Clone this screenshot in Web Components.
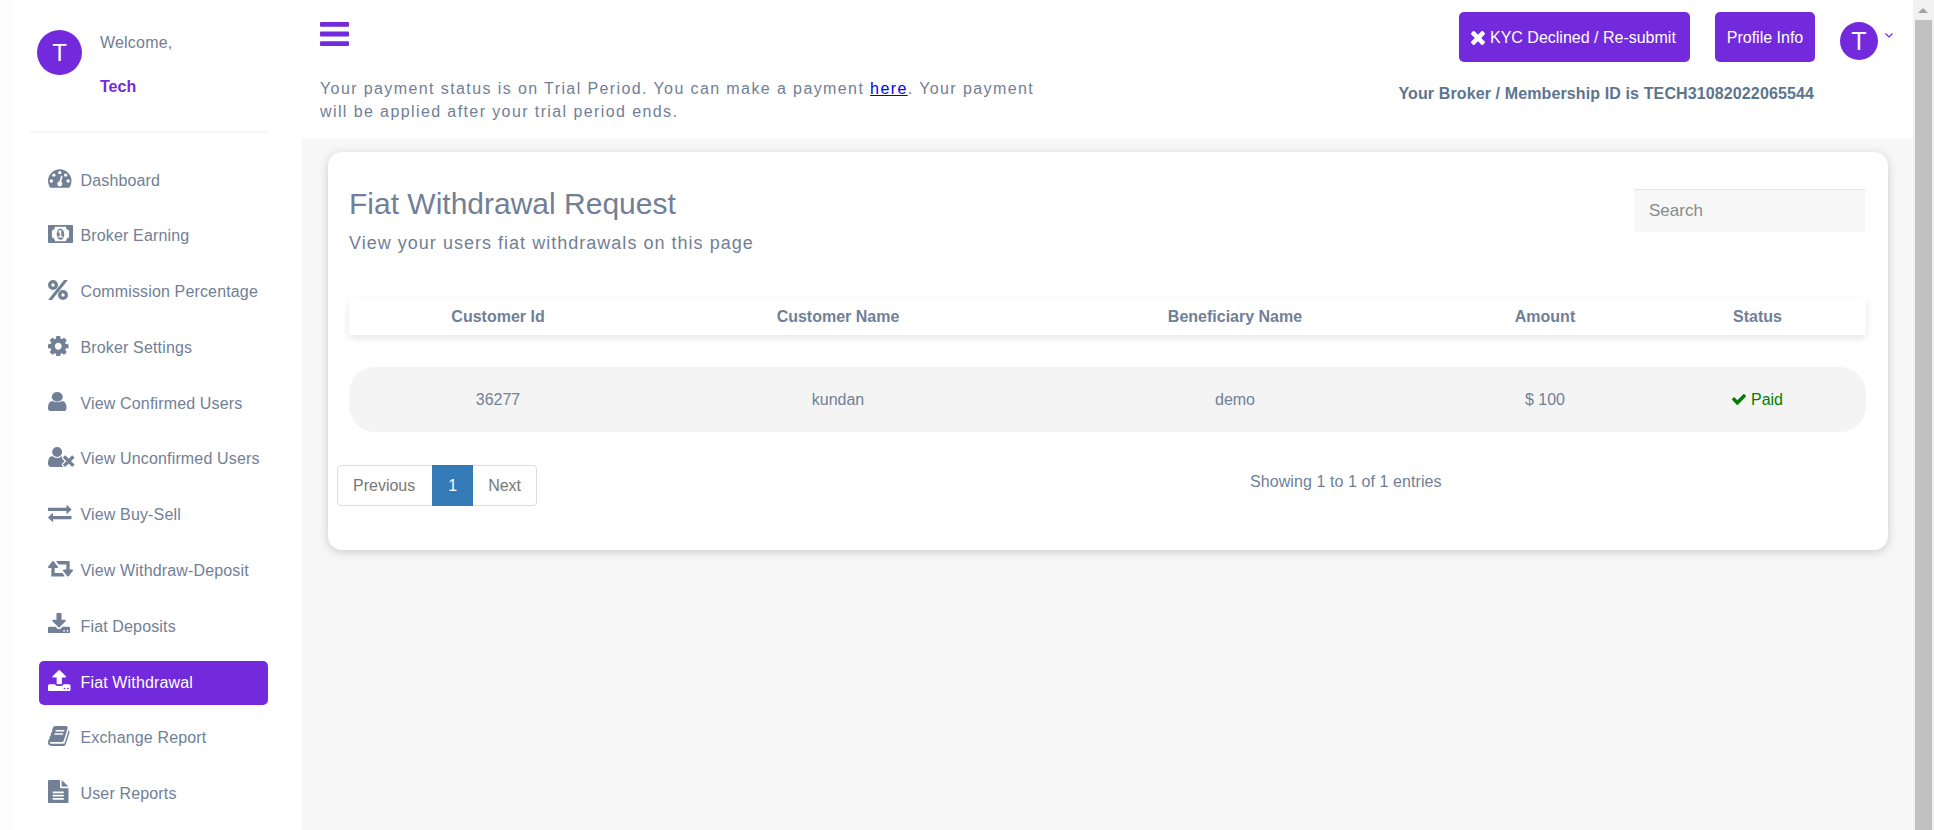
<!DOCTYPE html>
<html>
<head>
<meta charset="utf-8">
<title>Fiat Withdrawal</title>
<style>
    html, body { margin: 0; height: 830px; overflow: hidden; }
    body { font-family: "Liberation Sans", Arial, sans-serif; background: #f7f7f7; color: #718096; }
</style>
</head>
<body>
<app-shell>
    <side-bar slot="side"></side-bar>
    <top-bar slot="top"></top-bar>
    <withdrawal-card></withdrawal-card>
</app-shell>

<script>
// Font Awesome 4 style glyphs, cropped tight to the shape
const ICONS = {
    dashboard: '<svg viewBox="0 256 1792 1408"><path d="M384 1152q0-53-37.500-90.500T256 1024t-90.500 37.500T128 1152t37.500 90.500T256 1280t90.500-37.500T384 1152zm192-448q0-53-37.500-90.500T448 576t-90.500 37.500T320 704t37.500 90.500T448 832t90.500-37.500T576 704zm428 506l101-382q6-26-7.500-48.500T1059 750t-48 6.500-30 39.500l-101 382q-60 5-107 43.500t-63 98.500q-20 77 20 146t117 89 146-20 89-117q16-60-6-117t-72-91zm660-58q0-53-37.500-90.500T1536 1024t-90.500 37.500T1408 1152t37.500 90.500 90.500 37.500 90.500-37.500 37.500-90.500zm-640-640q0-53-37.500-90.500T896 384t-90.500 37.500T768 512t37.500 90.500T896 640t90.500-37.500T1024 512zm448 192q0-53-37.500-90.500T1344 576t-90.500 37.500T1216 704t37.500 90.500T1344 832t90.500-37.500T1472 704zm320 448q0 261-141 483-19 29-54 29H195q-35 0-54-29Q0 1414 0 1152q0-182 71-348t191-286 286-191 348-71 348 71 286 191 191 286 71 348z"/></svg>',
    money: '<svg viewBox="0 256 2048 1280" preserveAspectRatio="none"><path fill-rule="evenodd" d="M64 256h1920q26 0 45 19t19 45v1152q0 26-19 45t-45 19H64q-26 0-45-19t-19-45V320q0-26 19-45t45-19zM576 384q0 106-75 181t-181 75v512q106 0 181 75t75 181h896q0-106 75-181t181-75V640q-106 0-181-75t-75-181zM1024 512q68 0 126.500 39t101 101 59.500 134 21 110-21 142-59.500 134-101 101-126.500 39-126.500-39-101-101-59.500-134-21-142 21-110 59.500-134 101-101 126.500-39zM832 1152h384v-96h-128V608H974L826 745l77 80q42-37 55-57h2v288H832z"/></svg>',
    percent: '<svg viewBox="-128 128 1536 1536"><path fill-rule="evenodd" d="M256 128a384 384 0 1 0 0 768a384 384 0 1 0 0-768zM256 384a128 128 0 1 1 0 256a128 128 0 1 1 0-256zM1024 896a384 384 0 1 0 0 768a384 384 0 1 0 0-768zM1024 1152a128 128 0 1 1 0 256a128 128 0 1 1 0-256z"/><path d="M1090 150q16-22 45-22h215q50 0 25 40L190 1642q-16 22-45 22H-70q-50 0-25-40z"/></svg>',
    cog: '<svg viewBox="128 128 1536 1536"><path d="M1152 896q0-106-75-181t-181-75-181 75-75 181 75 181 181 75 181-75 75-181zm512-109v222q0 12-8 23t-20 13l-185 28q-19 54-39 91 35 50 107 138 10 12 10 25t-9 23q-27 37-99 108t-94 71q-12 0-26-9l-138-108q-44 23-91 38-16 136-29 186-7 28-36 28H785q-14 0-24.500-8.500T749 1634l-28-184q-49-16-90-37l-141 107q-10 9-25 9-14 0-25-11-126-114-165-168-7-10-7-23 0-12 8-23 15-21 51-66.500t54-70.500q-27-50-41-99l-183-27q-13-2-21-12.500T128 1004V782q0-12 8-23t19-13l186-28q14-46 39-92-40-57-107-138-10-12-10-24 0-10 9-23 26-36 98.500-107.500T465 262q13 0 26 10l138 107q44-23 91-38 16-136 29-186 7-28 36-28h222q14 0 24.500 8.500T1043 158l28 184q49 16 90 37l142-107q9-9 24-9 13 0 25 10 129 119 165 170 7 8 7 22 0 12-8 23-15 21-51 66.500t-54 70.500q26 50 41 98l183 28q13 2 21 12.500t8 23.500z"/></svg>',
    user: '<svg viewBox="0 128 1280 1536" preserveAspectRatio="none"><path d="M1280 1399q0 109-62.500 187t-150.500 78H213q-88 0-150.500-78T0 1399q0-85 8.500-160.500t31.500-152 58.500-131 94-89T327 832q117 112 313 112t313-112q72 0 134.500 34.500t94 89 58.500 131 31.500 152 8.500 160.500zM1024 512q0 159-112.500 271.500T640 896 368.500 783.500 256 512t112.500-271.500T640 128t271.500 112.500T1024 512z"/></svg>',
    userx: '<svg viewBox="0 128 2048 1536"><path d="M704 896q-159 0-271.500-112.500T320 512t112.500-271.500T704 128t271.500 112.500T1088 512 975.500 783.500 704 896zm1077 320l249 249q9 9 9 23 0 13-9 22l-136 136q-9 9-22 9-14 0-23-9l-249-249-249 249q-9 9-23 9-13 0-22-9l-136-136q-9-9-9-22 0-14 9-23l249-249-249-249q-9-9-9-23 0-13 9-22l136-136q9-9 22-9 14 0 23 9l249 249 249-249q9-9 23-9 13 0 22 9l136 136q9 9 9 22 0 14-9 23zm-498 0l-181 181q-37 37-37 91 0 53 37 90l83 83q-21 3-44 3H267q-121 0-194-69T0 1405q0-53 3.500-103.500t14-109T44 1084t43-97.500 62-81 85.500-53.500T346 832q19 0 39 17 154 122 319 122t319-122q20-17 39-17 28 0 57 6-28 27-41 50t-13 56q0 54 37 91z"/></svg>',
    exchange: '<svg viewBox="0 288 1792 1344" preserveAspectRatio="none"><path d="M1792 1184v192q0 13-9.500 22.500t-22.500 9.500H384v192q0 13-9.500 22.500T352 1632q-12 0-24-10L8 1302q-8-9-8-23 0-13 9-22l321-320q9-9 23-9 13 0 22.500 9.500T385 960v192h1375q13 0 22.500 9.500t9.500 22.500zm0-544q0 14-9 23l-320 320q-9 9-23 9-13 0-22.500-9.500T1408 960V768H32q-13 0-22.500-9.500T0 736V544q0-13 9.500-22.500T32 512h1376V320q0-14 9-23t23-9q12 0 24 10l319 319q9 9 9 23z"/></svg>',
    retweet: '<svg viewBox="0 384 1920 1152" preserveAspectRatio="none"><path d="M1280 1504q0 13-9.500 22.500T1248 1536H288q-8 0-13.500-2t-9-7-5.500-8-3-11.500-1-11.500V896H64q-26 0-45-19T0 832q0-24 15-41l320-384q19-22 49-22t49 22l320 384q15 17 15 41 0 26-19 45t-45 19H512v384h576q16 0 25 11l160 192q7 11 7 21zm640-416q0 24-15 41l-320 384q-20 23-49 23t-49-23l-320-384q-15-17-15-41 0-26 19-45t45-19h192V640H832q-16 0-25-12L647 436q-7-9-7-20 0-13 9.500-22.500T672 384h960q8 0 13.500 2t9 7 5.500 8 3 11.500 1 11.500v600h192q26 0 45 19t19 45z"/></svg>',
    download: '<svg viewBox="0 0 1664 1536" preserveAspectRatio="none"><path d="M1280 1344q0-26-19-45t-45-19-45 19-19 45 19 45 45 19 45-19 19-45zm256 0q0-26-19-45t-45-19-45 19-19 45 19 45 45 19 45-19 19-45zm128-224v320q0 40-28 68t-68 28H96q-40 0-68-28t-28-68v-320q0-40 28-68t68-28h465l135 136q58 56 136 56t136-56l136-136h464q40 0 68 28t28 68zm-325-569q17 41-14 70l-448 448q-18 19-45 19t-45-19L339 621q-31-29-14-70 17-39 59-39h256V64q0-26 19-45t45-19h256q26 0 45 19t19 45v448h256q42 0 59 39z"/></svg>',
    upload: '<svg viewBox="0 0 1664 1600" preserveAspectRatio="none"><path d="M1280 1408q0-26-19-45t-45-19-45 19-19 45 19 45 45 19 45-19 19-45zm256 0q0-26-19-45t-45-19-45 19-19 45 19 45 45 19 45-19 19-45zm128-224v320q0 40-28 68t-68 28H96q-40 0-68-28t-28-68v-320q0-40 28-68t68-28h427q21 56 70.500 92t110.500 36h256q61 0 110.500-36t70.500-92h427q40 0 68 28t28 68zm-325-648q-17 40-59 40h-256v448q0 26-19 45t-45 19H704q-26 0-45-19t-19-45V576H384q-42 0-59-40-17-39 14-69L787 19q18-19 45-19t45 19l448 448q31 30 14 69z"/></svg>',
    book: '<svg viewBox="0 64 1664 1600" preserveAspectRatio="none"><path d="M1639 478q40 57 18 129l-275 906q-19 64-76.500 107.500T1183 1664H260q-77 0-148.500-53.500T12 1479q-24-67-2-127 0-4 3-27t4-37q1-8-3-21.500t-3-19.500q2-11 8-21t16.500-23.500T51 1179q23-38 45-91.500t30-91.500q3-10 .5-30t-.5-28q3-11 17-28t17-23q21-36 42-92t25-90q1-9-2.500-32t.5-28q4-13 22-30.500t22-22.500q19-26 42.500-84.500T338 350q1-8-3-25.500t-2-26.500q2-8 9-18t18-23 17-21q8-12 16.500-30.500t15-35 16-36 19.500-32T490 78t36.500-11.500T574 72l-1 3q38-9 51-9h761q74 0 114 56t18 130l-274 906q-36 119-71.500 153.500T1043 1346H174q-27 0-38 15-11 16-1 43 24 70 144 70h923q29 0 56-15.500t35-41.500l300-987q7-22 5-57 38 15 41 105zM575 480q-4 13 2 22.500t20 9.500h608q13 0 25.500-9.500T1247 480l21-64q4-13-2-22.500t-20-9.500H638q-13 0-25.500 9.500T596 416zm-83 256q-4 13 2 22.500t20 9.500h608q13 0 25.500-9.500T1164 736l21-64q4-13-2-22.500t-20-9.500H555q-13 0-25.500 9.500T513 672z"/></svg>',
    file: '<svg viewBox="0 0 1536 1792" preserveAspectRatio="none"><path fill-rule="evenodd" d="M896 0H96Q56 0 28 28T0 96v1600q0 40 28 68t68 28h1344q40 0 68-28t28-68V640H992q-40 0-68-28t-28-68zM352 896h832v128H352zM352 1152h832v128H352zM352 1408h832v128H352z"/><path d="M1024 0v512h512z"/></svg>',
    close: '<svg viewBox="110 302 1188 1188" preserveAspectRatio="none"><path d="M1298 1322q0 40-28 68l-136 136q-28 28-68 28t-68-28L704 1232l-294 294q-28 28-68 28t-68-28L138 1390q-28-28-28-68t28-68l294-294-294-294q-28-28-28-68t28-68l136-136q28-28 68-28t68 28l294 294 294-294q28-28 68-28t68 28l136 136q28 28 28 68t-28 68L976 960l294 294q28 28 28 68z" transform="translate(0 -64)"/></svg>',
    check: '<svg viewBox="120 330 1552 1200" preserveAspectRatio="none"><path d="M1671 566q0 40-28 68l-724 724-136 136q-28 28-68 28t-68-28l-136-136-362-362q-28-28-28-68t28-68l136-136q28-28 68-28t68 28l294 295 656-657q28-28 68-28t68 28l136 136q28 28 28 68z"/></svg>',
    bars: '<svg viewBox="0 0 29 24" preserveAspectRatio="none"><rect width="29" height="4.800" y="0" rx="1"/><rect width="29" height="4.800" y="9.600" rx="1"/><rect width="29" height="4.800" y="19.200" rx="1"/></svg>',
    chevron: '<svg viewBox="0 0 8 5"><path d="M.5.500l3.500 3.500 3.500-3.500" fill="none" stroke="currentColor" stroke-width="1.200"/></svg>'
};

class UserAvatar extends HTMLElement {
    constructor(){
        super();
        const root = this.attachShadow({mode:'open'});
        root.innerHTML = `
            <style>
                :host {
                    display: flex;
                    align-items: center;
                    justify-content: center;
                    width: var(--size, 45px);
                    height: var(--size, 45px);
                    flex: none;
                    border-radius: 50%;
                    background: #7329dc;
                    color: #fff;
                    font-size: var(--letter, 24px);
                }
            </style>
            <slot></slot>
        `;
    }
}
customElements.define('user-avatar', UserAvatar);

class NavItem extends HTMLElement {
    constructor(){
        super();
        const root = this.attachShadow({mode:'open'});
        root.innerHTML = `
            <style>
                :host {
                    display: flex;
                    align-items: center;
                    height: 44px;
                    margin-left: 39px;
                    width: 229px;
                    padding-left: 9px;
                    box-sizing: border-box;
                    border-radius: 5px;
                    font-size: 16px;
                    letter-spacing: .15px;
                    color: #718096;
                }
                :host([active]) { background: #7329dc; color: #fff; }
                .icon { width: 32.500px; flex: none; display: flex; align-items: center; }
                .icon svg { display: block; fill: currentColor; }
            </style>
            <span class="icon"></span><slot></slot>
        `;
    }

    connectedCallback() {
        const icon = this.shadowRoot.querySelector('.icon');
        icon.innerHTML = ICONS[this.getAttribute('icon')] || '';
        const svg = icon.firstElementChild;
        svg.style.width = this.getAttribute('w') + 'px';
        svg.style.height = this.getAttribute('h') + 'px';
        icon.style.marginTop = (this.getAttribute('lift') || -4) + 'px';
    }
}
customElements.define('nav-item', NavItem);

class SideBar extends HTMLElement {
    constructor(){
        super();
        const root = this.attachShadow({mode:'open'});
        const items = [
            ['dashboard', 'Dashboard', 23.5, 19],
            ['money', 'Broker Earning', 25, 18],
            ['percent', 'Commission Percentage', 20, 20],
            ['cog', 'Broker Settings', 20.500, 20.500],
            ['user', 'View Confirmed Users', 18.500, 19.500],
            ['userx', 'View Unconfirmed Users', 26.500, 20],
            ['exchange', 'View Buy-Sell', 23.500, 17],
            ['retweet', 'View Withdraw-Deposit', 25, 15.500],
            ['download', 'Fiat Deposits', 22, 20.500, -8],
            ['upload', 'Fiat Withdrawal', 22.500, 21, -5],
            ['book', 'Exchange Report', 21.500, 20],
            ['file', 'User Reports', 20.500, 23, -5]
        ];
        root.innerHTML = `
            <style>
                :host {
                    display: block;
                    width: 302px;
                    height: 830px;
                    flex: none;
                    background: linear-gradient(90deg, #fdfdfd 13px, #fff 13px);
                }
                .user {
                    display: flex;
                    gap: 18px;
                    height: 131px;
                    box-sizing: border-box;
                    padding: 30px 0 0 37px;
                }
                .who { font-size: 16px; color: #718096; padding-top: 4px; letter-spacing: .2px; }
                .who b { display: block; color: #7329dc; margin-top: 26px; letter-spacing: 0; }
                hr { border: 0; height: 2px; margin: 0 34px 0 30px; background: #f7f7f7; }
                nav { display: flex; flex-direction: column; gap: 11.800px; padding-top: 25.500px; }
            </style>
            <div class="user">
                <user-avatar>T</user-avatar>
                <div class="who">Welcome,<b>Tech</b></div>
            </div>
            <hr>
            <nav>
                ${items.map((i, n) => `<nav-item icon="${i[0]}" w="${i[2]}" h="${i[3]}" ${i[4] ? `lift="${i[4]}"` : ''} ${n === 9 ? 'active' : ''}>${i[1]}</nav-item>`).join('')}
            </nav>
        `;
    }
}
customElements.define('side-bar', SideBar);

class TopBar extends HTMLElement {
    constructor(){
        super();
        const root = this.attachShadow({mode:'open'});
        root.innerHTML = `
            <style>
                :host {
                    display: flex;
                    justify-content: space-between;
                    height: 138px;
                    background: #fff;
                    box-sizing: border-box;
                    padding: 0 20px 0 18px;
                    flex: none;
                }
                .bars { display: block; width: 29px; height: 24px; margin-top: 22px; fill: #7329dc; }
                .bars svg { display: block; width: 29px; height: 24px; }
                p {
                    margin: 31px 0 0;
                    width: 740px;
                    font-size: 16px;
                    line-height: 23px;
                    letter-spacing: 1.400px;
                }
                a { color: #00e; font-weight: normal; }
                .right { display: flex; flex-direction: column; align-items: flex-end; }
                .actions { display: flex; align-items: flex-start; padding-top: 12px; }
                button {
                    height: 50px;
                    border: 0;
                    border-radius: 5px;
                    background: #7329dc;
                    color: #fff;
                    font: 16px "Liberation Sans", Arial, sans-serif;
                    padding: 1px 11px 0;
                    display: flex;
                    align-items: center;
                    gap: 5px;
                    white-space: nowrap;
                }
                button svg { width: 14px; height: 14px; fill: #fff; }
                button + button { margin-left: 25px; }
                .kyc { width: 231px; padding-left: 12px; }
                .profile { width: 100px; justify-content: center; }
                .me { display: flex; margin-left: 25px; margin-top: 10px; color: #7329dc; --size: 38px; --letter: 25px; }
                .chev { width: 8px; height: 5px; margin: 11px 0 0 7px; }
                .chev svg { display: block; width: 8px; height: 5px; }
                .id { font-size: 16px; letter-spacing: .12px; font-weight: bold; color: #5b7590; margin: 23px 79px 0 0; white-space: nowrap; }
            </style>
            <div>
                <span class="bars">${ICONS.bars}</span>
                <p>Your payment status is on Trial Period. You can make a payment <a href="#">here</a>. Your payment will be applied after your trial period ends.</p>
            </div>
            <div class="right">
                <div class="actions">
                    <button class="kyc">${ICONS.close}KYC Declined / Re-submit</button>
                    <button class="profile">Profile Info</button>
                    <div class="me"><user-avatar>T</user-avatar><span class="chev">${ICONS.chevron}</span></div>
                </div>
                <div class="id">Your Broker / Membership ID is TECH31082022065544</div>
            </div>
        `;
    }
}
customElements.define('top-bar', TopBar);

class WithdrawalCard extends HTMLElement {
    constructor(){
        super();
        const root = this.attachShadow({mode:'open'});
        root.innerHTML = `
            <style>
                :host {
                    display: block;
                    height: 398px;
                    margin: 14px 25px 0 26px;
                    box-sizing: border-box;
                    padding: 34px 22px 0 21px;
                    background: #fff;
                    border-radius: 14px;
                    box-shadow: 0 2px 10px rgba(0,0,0,.18);
                    color: #718096;
                }
                .head { display: flex; justify-content: space-between; align-items: flex-start; height: 112px; }
                h1 { margin: 0; font-size: 30px; font-weight: normal; line-height: 36px; }
                .sub { font-size: 18px; letter-spacing: 1.020px; margin-top: 11px; }
                input {
                    width: 231px;
                    height: 43px;
                    box-sizing: border-box;
                    border: 0;
                    border-top: 1px solid #e5e5e5;
                    background: #f7f7f7;
                    padding: 0 15px;
                    font: 17px "Liberation Sans", Arial, sans-serif;
                    margin: 3px 1px 0 0;
                }
                input::placeholder { color: #8a8a8a; }
                .row {
                    display: grid;
                    grid-template-columns: 298px 382px 412px 208px 217px;
                    text-align: center;
                    align-items: center;
                    font-size: 16px;
                }
                .th {
                    height: 37px;
                    font-weight: bold;
                    box-shadow: 0 3px 8px rgba(0,0,0,.1);
                }
                .td {
                    height: 65px;
                    margin-top: 32px;
                    background: #f4f4f4;
                    border-radius: 26px;
                }
                .paid { color: green; display: flex; justify-content: center; align-items: center; gap: 5px; }
                .paid svg { width: 14px; height: 11px; fill: green; }
                .foot { display: flex; margin-top: 33px; margin-left: -12px; }
                .info { margin-left: 713px; margin-top: 8px; font-size: 16px; letter-spacing: .08px; white-space: nowrap; }
                .pager { display: flex; height: 41px; width: 200px; flex: none; border: 1px solid #ddd; border-radius: 4px; box-sizing: border-box; font-size: 16px; color: #777; align-items: center; }
                .pager span { padding: 0 15px; }
                .pager span:first-child { padding-right: 17px; }
                .pager .cur { background: #337ab7; color: #fff; height: 41px; line-height: 41px; padding: 0 16px; }
            </style>
            <div class="head">
                <div>
                    <h1>Fiat Withdrawal Request</h1>
                    <div class="sub">View your users fiat withdrawals on this page</div>
                </div>
                <input placeholder="Search">
            </div>
            <div class="row th"><div>Customer Id</div><div>Customer Name</div><div>Beneficiary Name</div><div>Amount</div><div>Status</div></div>
            <div class="row td"><div>36277</div><div>kundan</div><div>demo</div><div>$ 100</div><div class="paid">${ICONS.check}Paid</div></div>
            <div class="foot">
                <div class="pager"><span>Previous</span><span class="cur">1</span><span>Next</span></div>
                <div class="info">Showing 1 to 1 of 1 entries</div>
            </div>
        `;
    }
}
customElements.define('withdrawal-card', WithdrawalCard);

class FakeScrollbar extends HTMLElement {
    constructor(){
        super();
        const root = this.attachShadow({mode:'open'});
        root.innerHTML = `
            <style>
                :host { display: block; width: 21px; height: 830px; flex: none; background: #f1f1f1; position: relative; }
                .up { width: 0; height: 0; border: 5px solid transparent; border-bottom: 5px solid #a3a3a3; border-top: 0; margin: 8px 0 0 5px; }
                .thumb { position: absolute; left: 2px; width: 17px; top: 20px; bottom: 0; background: #c1c1c1; }
            </style>
            <div class="up"></div><div class="thumb"></div>
        `;
    }
}
customElements.define('fake-scrollbar', FakeScrollbar);

class AppShell extends HTMLElement {
    constructor(){
        super();
        const root = this.attachShadow({mode:'open'});
        root.innerHTML = `
            <style>
                :host { display: flex; width: 1934px; height: 830px; overflow: hidden; }
                .main { flex: 1; min-width: 0; display: flex; flex-direction: column; background: #f7f7f7; }
            </style>
            <slot name="side"></slot>
            <div class="main"><slot name="top"></slot><slot></slot></div>
            <fake-scrollbar></fake-scrollbar>
        `;
    }
}
customElements.define('app-shell', AppShell);
</script>
</body>
</html>
